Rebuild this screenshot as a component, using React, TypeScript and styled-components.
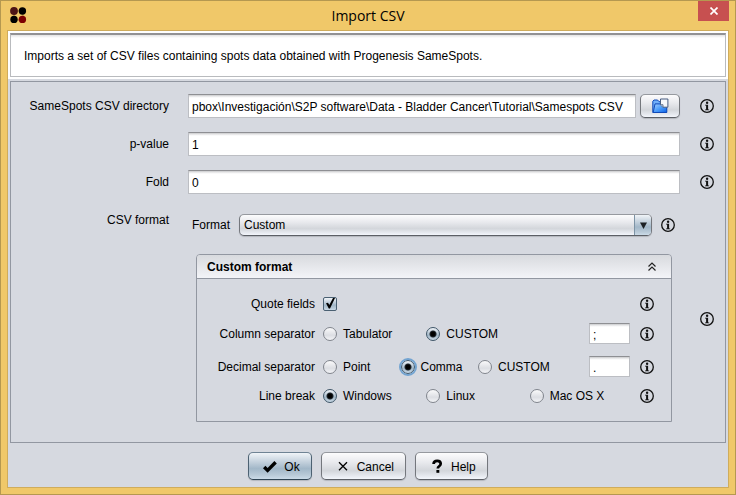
import React, { useId, useState } from "react";
import styled, { createGlobalStyle, css } from "styled-components";

const GlobalStyle = createGlobalStyle`
  *, *::before, *::after { box-sizing: border-box; }
  body { margin: 0; }
  body, input, select, button {
    font-family: "Liberation Sans", Arial, sans-serif;
    font-size: 12px;
    line-height: 14px;
    color: #000;
  }
`;

const line = "#9297a1";
const surface = "#d6d9e0";

const silver = "linear-gradient(#fcfcfd 0%, #e9eaee 35%, #d3d6db 68%, #e6e9ef 88%, #f3f6fc 100%)";
const steel = "linear-gradient(#f0f4f8 0%, #c3d0dc 35%, #a2b7c8 60%, #b9cad8 85%, #cbdbe8 100%)";

const Window = styled.div`
  display: flex;
  flex-direction: column;
  min-height: 100vh;
  padding: 0 6px 6px;
  border: 1px solid #b59850;
  background: #f0c869;
`;

const TitleBar = styled.header`
  display: grid;
  grid-template-columns: 1fr auto 1fr;
  height: 29px;
`;

const AppIcon = styled.svg`
  margin: 5px 0 0 2px;
`;

const WindowTitle = styled.h1`
  margin: 0;
  padding-top: 5px;
  font: 400 14px/20px "Open Sans", "Noto Sans", sans-serif;
`;

const CloseButton = styled.button`
  display: flex;
  align-items: center;
  justify-content: center;
  justify-self: end;
  width: 31px;
  height: 20px;
  padding: 0;
  border: 0;
  background: #c75050;
`;

const Content = styled.main`
  flex: 1;
  display: flex;
  flex-direction: column;
  border: 1px solid #cfac5c;
  background: ${surface};
`;

const DescriptionArea = styled.div`
  padding: 2px;
  background: #fff;
`;

const Description = styled.p`
  margin: 0;
  padding: 14px 13px 13px;
  border: 1px solid #b9bbbe;
  border-top: 2px solid #929294;
  background: linear-gradient(#e3e3e4, #fff 3px);
`;

const FormPanel = styled.form`
  display: flex;
  flex-direction: column;
  gap: 14px;
  margin: 2px 2px 0;
  padding: 12px 0;
  border: 1px solid ${line};
`;

const FormRow = styled.div`
  display: grid;
  grid-template-columns: 177px 1fr 45px;
  align-items: center;
  & > button {
    margin-left: 20px;
  }
`;

const RowLabel = styled.label`
  align-self: start;
  padding-right: 19px;
  line-height: 24px;
  text-align: right;
`;

const FieldCell = styled.div`
  display: flex;
  gap: 4px;
  min-width: 0;
`;

const FormatCell = styled.div`
  min-width: 0;
  padding: 6px 0 8px;
`;

const TextField = styled.input<{ $short?: boolean }>`
  flex: 1;
  min-width: 0;
  height: 24px;
  padding: 1px 3px 0;
  border: 1px solid #bcbec3;
  border-top-color: #8e8f93;
  border-radius: 0;
  outline: 0;
  background: linear-gradient(#c9cacc, #f4f4f5 2px, #fff 3px);
  ${(p) =>
    p.$short &&
    css`
      justify-self: end;
      width: 41px;
      height: 21px;
      margin-right: 3px;
      padding-top: 3px;
    `}
`;

const raised = css`
  border: 1px solid;
  border-color: #96999f #74777d #5c5f66;
  border-radius: 5px;
  box-shadow: 0 1px 1px #b3b6bd;
`;

const BrowseButton = styled.button`
  ${raised}
  display: flex;
  align-items: center;
  justify-content: center;
  width: 40px;
  height: 24px;
  padding: 0;
  background: ${silver};
`;

const InfoButton = styled.button`
  display: block;
  width: 14px;
  height: 14px;
  padding: 0;
  border: 0;
  background: none;
`;

const FormatLine = styled.div`
  display: flex;
  align-items: center;
  gap: 9px;
  padding: 0 5px 0 4px;
`;

const SelectBox = styled.span`
  ${raised}
  flex: 1;
  display: flex;
  position: relative;
  height: 22px;
  overflow: hidden;
  background: ${silver};
`;

const Select = styled.select`
  flex: 1;
  padding: 0 20px 0 4px;
  border: 0;
  outline: 0;
  appearance: none;
  background: none;
`;

const SelectArrow = styled.span`
  position: absolute;
  inset: 0 0 0 auto;
  display: flex;
  align-items: center;
  justify-content: center;
  width: 17px;
  border-left: 1px solid #7d93a5;
  background: ${steel};
  pointer-events: none;
`;

const CustomPanel = styled.section`
  margin: 18px 8px 0;
  border: 1px solid ${line};
  border-radius: 4px 4px 0 0;
`;

const CustomHeader = styled.header`
  display: flex;
  align-items: center;
  justify-content: space-between;
  height: 24px;
  padding: 0 14px 0 10px;
  border-bottom: 1px solid ${line};
  border-radius: 3px 3px 0 0;
  background: linear-gradient(#d8dade, #f3f4f8);
`;

const CustomTitle = styled.h2`
  margin: 0;
  font-size: 12px;
  font-weight: 700;
`;

const CollapseButton = styled.button`
  display: flex;
  padding: 0;
  border: 0;
  background: none;
`;

const CustomBody = styled.div`
  display: flex;
  flex-direction: column;
  gap: 12px;
  padding: 18px 17px 18px 0;
`;

const OptionRow = styled.div`
  display: grid;
  grid-template-columns: 118px 1fr 14px;
  align-items: center;
  column-gap: 7px;
`;

const OptionLabel = styled.label`
  text-align: right;
`;

const Choices = styled.div<{ $columns: number }>`
  display: grid;
  grid-template-columns: repeat(${(p) => p.$columns}, 1fr);
  align-items: center;
  padding-left: 1px;
`;

const Choice = styled.label`
  display: flex;
  align-items: center;
  gap: 6px;
  white-space: nowrap;
`;

const Radio = styled.input`
  flex: none;
  width: 14px;
  height: 14px;
  margin: 0;
  appearance: none;
  border: 1px solid #81858d;
  border-radius: 50%;
  background: linear-gradient(#fafafb, #dcdee3 60%, #f3f4f7);
  &:checked {
    border-color: #3f5668;
    background: radial-gradient(circle, #000 0 2px, #20282e 3px, transparent 4px), ${steel};
  }
  &:focus {
    outline: 2px solid #73a4d1;
    outline-offset: 0;
  }
`;

const CheckWrap = styled.span`
  position: relative;
  display: flex;
  width: 14px;
  height: 14px;
`;

const Checkbox = styled.input`
  width: 14px;
  height: 14px;
  margin: 0;
  appearance: none;
  border: 1px solid #4a6072;
  border-radius: 2px;
  background: ${steel};
  &:not(:checked) + svg {
    display: none;
  }
`;

const CheckMark = styled.svg`
  position: absolute;
  inset: 0;
  pointer-events: none;
`;

const Footer = styled.footer`
  display: flex;
  justify-content: center;
  gap: 9px;
  padding: 9px 0 7px;
`;

const ActionButton = styled.button<{ $primary?: boolean }>`
  ${raised}
  display: flex;
  align-items: center;
  gap: 6px;
  height: 28px;
  padding: 2px 11px 0 13px;
  background: ${(p) => (p.$primary ? steel : silver)};
  ${(p) => p.$primary && "border-color: #6f8394 #4c6172 #2f4454;"}
`;

function Info({ about }: { about: string }) {
  return (
    <InfoButton type="button" aria-label={`About ${about}`}>
      <svg width="14" height="14" viewBox="0 0 14 14" aria-hidden="true">
        <circle cx="7" cy="7" r="6.3" fill="none" stroke="#111" strokeWidth="1.3" />
        <circle cx="7.1" cy="3.8" r="1.2" fill="#111" />
        <path d="M5 5.7h3.1v4.7h1v.9H5v-.9h1.1V6.6H5z" fill="#111" />
      </svg>
    </InfoButton>
  );
}

function FolderIcon() {
  return (
    <svg width="17" height="16" viewBox="0 0 17 16" aria-hidden="true">
      <defs>
        <linearGradient id="folder" x1="0" y1="0" x2="1" y2="1">
          <stop offset="0" stopColor="#a9d2ff" />
          <stop offset="0.5" stopColor="#4c9dfb" />
          <stop offset="1" stopColor="#0a5fe6" />
        </linearGradient>
      </defs>
      <path d="M.8 14.5V3.2L2 2h3.6L7 3.7h7.2v10.8z" fill="#71b0fa" stroke="#1049b8" />
      <path d="M1.2 14.5 3 5.9h11.8v8.6z" fill="url(#folder)" stroke="#1049b8" />
      <path d="M8.5 1h7.4v8.2H11L8.5 6.8z" fill="#f5f7fb" stroke="#485d80" />
      <path d="M8.6 6.7H11v2.4" fill="#cdd8e8" stroke="#485d80" strokeWidth=".8" />
    </svg>
  );
}

function FieldRow({ label, initial, browse }: { label: string; initial: string; browse?: boolean }) {
  const id = useId();
  return (
    <FormRow>
      <RowLabel htmlFor={id}>{label}</RowLabel>
      <FieldCell>
        <TextField id={id} defaultValue={initial} spellCheck={false} />
        {browse && (
          <BrowseButton type="button" aria-label="Browse for directory">
            <FolderIcon />
          </BrowseButton>
        )}
      </FieldCell>
      <Info about={label} />
    </FormRow>
  );
}

type RadioRowProps = {
  label: string;
  options: string[];
  initial: number;
  columns: number;
  custom?: string;
  focused?: boolean;
};

function RadioRow({ label, options, initial, columns, custom, focused }: RadioRowProps) {
  const id = useId();
  const [selected, setSelected] = useState(initial);
  return (
    <OptionRow>
      <OptionLabel as="span" id={id}>
        {label}
      </OptionLabel>
      <Choices $columns={columns} role="radiogroup" aria-labelledby={id}>
        {options.map((option, i) => (
          <Choice key={option}>
            <Radio
              type="radio"
              name={id}
              checked={selected === i}
              autoFocus={focused && i === initial}
              onChange={() => setSelected(i)}
            />
            {option}
          </Choice>
        ))}
        {custom && (
          <TextField $short aria-label={`Custom ${label.toLowerCase()}`} defaultValue={custom} />
        )}
      </Choices>
      <Info about={label} />
    </OptionRow>
  );
}

export default function App() {
  const [open, setOpen] = useState(true);
  return (
    <>
      <GlobalStyle />
      <Window>
        <TitleBar>
          <AppIcon width="18" height="18" viewBox="0 0 18 18" aria-hidden="true">
            <path d="M5 5h9v9H5z" fill="none" stroke="#b98d45" />
            <circle cx="5" cy="5" r="3.9" fill="#4d1416" />
            <circle cx="13.4" cy="5" r="3.7" fill="#000" />
            <circle cx="5" cy="13.4" r="3.7" fill="#000" />
            <circle cx="13.4" cy="13.4" r="3.7" fill="#7d0000" />
          </AppIcon>
          <WindowTitle>Import CSV</WindowTitle>
          <CloseButton type="button" aria-label="Close">
            <svg width="8" height="8" viewBox="0 0 8 8" aria-hidden="true">
              <path d="M.5.5l7 7M7.5.5l-7 7" stroke="#fff" strokeWidth="1.7" />
            </svg>
          </CloseButton>
        </TitleBar>

        <Content>
          <DescriptionArea>
            <Description>
              Imports a set of CSV files containing spots data obtained with Progenesis SameSpots.
            </Description>
          </DescriptionArea>

          <FormPanel>
            <FieldRow
              label="SameSpots CSV directory"
              initial={"pbox\\Investigación\\S2P software\\Data - Bladder Cancer\\Tutorial\\Samespots CSV"}
              browse
            />
            <FieldRow label="p-value" initial="1" />
            <FieldRow label="Fold" initial="0" />
            <FormRow>
              <RowLabel as="span">CSV format</RowLabel>
              <FormatCell>
                <FormatLine>
                  <label htmlFor="format">Format</label>
                  <SelectBox>
                    <Select id="format" defaultValue="Custom">
                      <option>Custom</option>
                    </Select>
                    <SelectArrow>
                      <svg width="7" height="7" viewBox="0 0 7 7" aria-hidden="true">
                        <path d="M0 .5h7L3.5 7z" fill="#1c2024" />
                      </svg>
                    </SelectArrow>
                  </SelectBox>
                  <Info about="Format" />
                </FormatLine>

                <CustomPanel>
                  <CustomHeader>
                    <CustomTitle>Custom format</CustomTitle>
                    <CollapseButton
                      type="button"
                      aria-label="Toggle custom format"
                      aria-expanded={open}
                      onClick={() => setOpen(!open)}
                    >
                      <svg width="10" height="10" viewBox="0 0 10 10" aria-hidden="true">
                        <path
                          d="M1.5 4.5 5 1 8.5 4.5M1.5 8.5 5 5 8.5 8.5"
                          fill="none"
                          stroke="#222"
                          strokeWidth="1.2"
                        />
                      </svg>
                    </CollapseButton>
                  </CustomHeader>
                  {open && (
                    <CustomBody>
                      <OptionRow>
                        <OptionLabel htmlFor="quote">Quote fields</OptionLabel>
                        <Choices $columns={1}>
                          <CheckWrap>
                            <Checkbox id="quote" type="checkbox" defaultChecked />
                            <CheckMark width="14" height="14" viewBox="0 0 14 14" aria-hidden="true">
                              <path d="M3 6.2 5 5.8 6.3 8 10 1h2L7 11.4H5.8z" fill="#000" />
                            </CheckMark>
                          </CheckWrap>
                        </Choices>
                        <Info about="Quote fields" />
                      </OptionRow>
                      <RadioRow
                        label="Column separator"
                        options={["Tabulator", "CUSTOM"]}
                        initial={1}
                        columns={3}
                        custom=";"
                      />
                      <RadioRow
                        label="Decimal separator"
                        options={["Point", "Comma", "CUSTOM"]}
                        initial={1}
                        columns={4}
                        custom="."
                        focused
                      />
                      <RadioRow
                        label="Line break"
                        options={["Windows", "Linux", "Mac OS X"]}
                        initial={0}
                        columns={3}
                      />
                    </CustomBody>
                  )}
                </CustomPanel>
              </FormatCell>
              <Info about="CSV format" />
            </FormRow>
          </FormPanel>

          <Footer>
            <ActionButton type="button" $primary>
              <svg width="16" height="16" viewBox="0 0 16 16" aria-hidden="true">
                <path d="M2.2 8 5.6 11.4 13.6 3.2" fill="none" stroke="#000" strokeWidth="3.4" />
              </svg>
              Ok
            </ActionButton>
            <ActionButton type="button">
              <svg width="16" height="16" viewBox="0 0 16 16" aria-hidden="true">
                <path d="M4 3.2l8 8M12 3.2l-8 8" stroke="#000" strokeWidth="1.3" />
              </svg>
              Cancel
            </ActionButton>
            <ActionButton type="button">
              <svg width="16" height="16" viewBox="0 0 16 16" aria-hidden="true">
                <path
                  d="M4.6 5C4.6 2.6 6 1.8 8.2 1.8s3.5 1 3.5 3c0 2.5-2.9 2.4-2.9 4.6"
                  fill="none"
                  stroke="#000"
                  strokeWidth="2.7"
                />
                <path d="M7.4 11h2.9v2.8H7.4z" fill="#000" />
              </svg>
              Help
            </ActionButton>
          </Footer>
        </Content>
      </Window>
    </>
  );
}
